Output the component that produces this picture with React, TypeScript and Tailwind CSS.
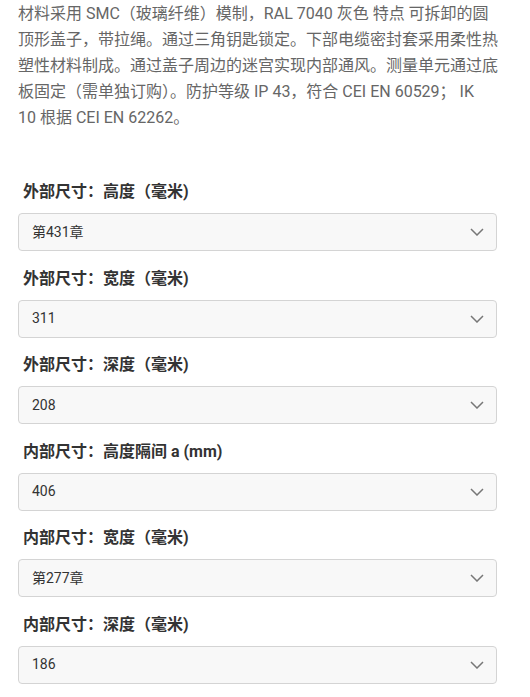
const fields = [
  { label: "外部尺寸：高度（毫米)", value: "第431章" },
  { label: "外部尺寸：宽度（毫米)", value: "311" },
  { label: "外部尺寸：深度（毫米)", value: "208" },
  { label: "内部尺寸：高度隔间 a (mm)", value: "406" },
  { label: "内部尺寸：宽度（毫米)", value: "第277章" },
  { label: "内部尺寸：深度（毫米)", value: "186" },
];

const Chevron = () => (
  <svg width="14" height="8" viewBox="0 0 14 8" fill="none">
    <path d="M1 1l6 6 6-6" stroke="#777" strokeWidth="1.5" />
  </svg>
);

const App = () => {
  return (
    <div className="w-[530px] bg-white px-[18px] font-['Roboto','Noto_Sans_CJK_SC',sans-serif]">
      <p className="w-[480px] pt-[1px] text-[16px] leading-[26px] text-[#666]">
        材料采用 SMC（玻璃纤维）模制，RAL 7040 灰色 特点 可拆卸的圆顶形盖子，带拉绳。通过三角钥匙锁定。下部电缆密封套采用柔性热塑性材料制成。通过盖子周边的迷宫实现内部通风。测量单元通过底板固定（需单独订购）。防护等级 IP 43，符合 CEI EN 60529； IK{" "}
        <br />
        10 根据 CEI EN 62262。
      </p>

      <div className="mt-[50px] flex w-[479px] flex-col">
        {fields.map((f) => (
          <div key={f.label} className="mb-[16.6px] flex flex-col">
            <label className="mb-[10px] pl-[5px] text-[16px] font-bold leading-[22px] text-[#333]">
              {f.label}
            </label>
            <div className="flex h-[38px] items-center justify-between rounded-[4px] border border-[#d4d4d4] bg-[#f8f8f8] pl-[13px] pr-[12px]">
              <span className="text-[14px] text-[#333]">{f.value}</span>
              <Chevron />
            </div>
          </div>
        ))}
      </div>
    </div>
  );
};

export default App;
